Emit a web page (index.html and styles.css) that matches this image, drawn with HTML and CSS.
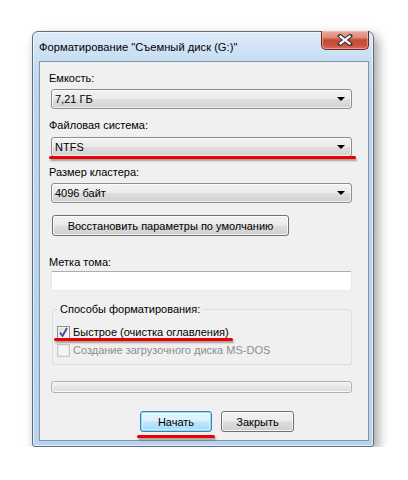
FILE: index.html
```html
<!DOCTYPE html>
<html lang="ru">
<head>
<meta charset="utf-8">
<link rel="stylesheet" href="styles.css">
</head>
<body>
<div class="window">
  <div class="titlebar">
    <span class="title">Форматирование "Съемный диск (G:)"</span>
    <div class="close">
      <svg width="16" height="12" viewBox="0 0 16 12"><path d="M3 2 L13 10 M13 2 L3 10" stroke="#3a3a3a" stroke-width="4.2" stroke-linecap="square"/><path d="M3.5 2.5 L12.5 9.5 M12.5 2.5 L3.5 9.5" stroke="#fff" stroke-width="2.2" stroke-linecap="square"/></svg>
    </div>
  </div>
  <div class="client">
    <div class="label l1">Емкость:</div>
    <div class="combo"><span>7,21 ГБ</span><i class="arrow"></i></div>
    <div class="label l2">Файловая система:</div>
    <div class="mark-wrap">
      <div class="combo"><span>NTFS</span><i class="arrow"></i></div>
      <div class="redline r1"></div>
    </div>
    <div class="label l3">Размер кластера:</div>
    <div class="combo"><span>4096 байт</span><i class="arrow"></i></div>
    <div class="btn restore">Восстановить параметры по умолчанию</div>
    <div class="label l4">Метка тома:</div>
    <div class="textbox"></div>
    <div class="group">
      <div class="legend">Способы форматирования:</div>
      <div class="check-row mark-wrap">
        <span class="checkbox checked">
          <svg width="11" height="11" viewBox="0 0 11 11"><path d="M2 5.5 L4.5 9 L9 1" fill="none" stroke="#3d4f8f" stroke-width="1.8" stroke-linejoin="round"/></svg>
        </span>
        <span class="ck-label">Быстрое (очистка оглавления)</span>
        <div class="redline r2"></div>
      </div>
      <div class="check-row disabled">
        <span class="checkbox"></span>
        <span class="ck-label">Создание загрузочного диска MS-DOS</span>
      </div>
    </div>
    <div class="progress"></div>
    <div class="buttons">
      <div class="mark-wrap">
        <div class="btn default">Начать</div>
        <div class="redline r3"></div>
      </div>
      <div class="btn">Закрыть</div>
    </div>
  </div>
</div>
</body>
</html>
```

FILE: styles.css
```css
html, body {
  margin: 0;
  padding: 0;
  background: #ffffff;
}
body {
  padding: 31px 0 0 32px;
  font-family: "Liberation Sans", Arial, sans-serif;
  font-size: 11px;
  color: #000;
  white-space: nowrap;
}
.window {
  width: 342px;
  height: 416px;
  box-sizing: border-box;
  display: flex;
  flex-direction: column;
  padding: 0 4px 5px 6px;
  border-radius: 6px 6px 3px 3px;
  border: 1px solid #5d6c7b;
  background: linear-gradient(180deg, #dbeaf8 0px, #c6ddf3 30px, #bcd6f1 60px, #b9d4f0 100%);
  box-shadow: 4px 5px 12px rgba(0, 0, 0, 0.38), 0 0 0 1px rgba(255,255,255,0.6) inset;
}
.titlebar {
  height: 29px;
  flex: none;
  display: flex;
  align-items: flex-start;
  justify-content: space-between;
  margin-left: -6px;
  margin-right: -4px;
  padding-left: 6px;
}
.title {
  margin-top: 7px;
  line-height: 16px;
  font-size: 11.2px;
}
.close {
  width: 46px;
  height: 18px;
  margin-right: 4px;
  margin-top: -1px;
  border: 1px solid #6b2a22;
  border-top: none;
  border-radius: 0 0 5px 5px;
  background: linear-gradient(180deg, #e9a99c 0%, #dd8c7a 35%, #c64a36 50%, #c9503c 75%, #d86b58 100%);
  box-shadow: inset 0 0 0 1px rgba(255, 200, 190, 0.5);
  display: flex;
  align-items: center;
  justify-content: center;
}
.client {
  flex: 1;
  border: 1px solid #8495a7;
  background: #f0f0f0;
  display: flex;
  flex-direction: column;
  padding: 8px 16px 0 11px;
}
.label {
  line-height: 16px;
  height: 16px;
  margin-left: -2px;
}
.l2 { margin-top: 8px; }
.l3 { margin-top: 7px; }
.l4 { margin-top: 18px; }
.combo {
  margin-top: 3px;
  height: 20px;
  box-sizing: border-box;
  border: 1px solid #8c8d8d;
  border-radius: 3px;
  background: linear-gradient(180deg, #f3f3f3 0%, #ebebeb 48%, #dedede 52%, #d1d1d1 100%);
  box-shadow: inset 0 0 0 1px rgba(255,255,255,0.7);
  display: flex;
  align-items: center;
  justify-content: space-between;
  padding: 0 6px 0 3px;
  line-height: 16px;
}
.l2 + .mark-wrap .combo { margin-top: 4px; }
.arrow {
  width: 0;
  height: 0;
  border-left: 4px solid transparent;
  border-right: 4px solid transparent;
  border-top: 4px solid #000;
}
.mark-wrap {
  position: relative;
}
.redline {
  position: absolute;
  height: 3px;
  background: #ee0000;
  border-radius: 2px;
  box-shadow: 1px 2px 2px rgba(0, 0, 0, 0.35);
}
.r1 { left: -2px; right: -4px; top: 23px; }
.r2 { left: -3px; width: 179px; top: 15px; }
.r3 { left: -3px; width: 78px; top: 24px; }
.btn {
  height: 21px;
  box-sizing: border-box;
  border: 1px solid #707070;
  border-radius: 3px;
  background: linear-gradient(180deg, #f2f2f2 0%, #ebebeb 48%, #dddddd 52%, #cfcfcf 100%);
  box-shadow: inset 0 0 0 1px rgba(255,255,255,0.75);
  display: flex;
  align-items: center;
  justify-content: center;
  line-height: 16px;
}
.restore {
  margin-top: 12px;
  width: 237px;
  margin-left: 1px;
}
.textbox {
  margin-top: 1px;
  height: 20px;
  box-sizing: border-box;
  background: #fff;
  border: 1px solid #e3e9ef;
  border-top-color: #abadb3;
  border-radius: 2px;
}
.group {
  margin-top: 18px;
  margin-left: 1px;
  height: 56px;
  box-sizing: border-box;
  border: 1px solid #d5dfe5;
  border-radius: 3px;
  position: relative;
  padding: 13px 0 0 4px;
  display: flex;
  flex-direction: column;
}
.legend {
  position: absolute;
  top: -9px;
  left: 5px;
  padding: 0 2px;
  background: #f0f0f0;
  line-height: 16px;
}
.check-row {
  display: flex;
  align-items: center;
  height: 18px;
  gap: 3px;
}
.checkbox {
  width: 13px;
  height: 13px;
  box-sizing: border-box;
  border: 1px solid #8e8f8f;
  background: linear-gradient(135deg, #dcdcdc 0%, #f8f8f8 100%);
  box-shadow: inset 0 0 0 1px #f4f4f4;
  display: flex;
  align-items: center;
  justify-content: center;
  flex: none;
}
.ck-label { line-height: 16px; }
.disabled .checkbox {
  border-color: #c8c8c8;
  background: #f4f4f4;
  box-shadow: inset 0 0 0 1px #e8e8e8;
}
.disabled .ck-label { color: #8d8d8d; }
.progress {
  margin-top: 16px;
  height: 12px;
  box-sizing: border-box;
  border: 1px solid #b0b0b0;
  border-radius: 3px;
  background: linear-gradient(180deg, #f3f3f3 0%, #e6e6e6 50%, #dadada 100%);
  box-shadow: inset 0 0 0 1px #f8f8f8;
}
.buttons {
  margin-top: 18px;
  display: flex;
  justify-content: flex-start;
  gap: 9px;
  padding-left: 89px;
}
.buttons .btn {
  width: 73px;
}
.btn.default {
  width: 72px;
  border-color: #3c7fb1;
  background: linear-gradient(180deg, #eaf6fd 0%, #d9f0fc 48%, #bee6fd 52%, #a7d9f5 100%);
  box-shadow: inset 0 0 0 1px #90d9f8, inset 0 0 0 2px rgba(255,255,255,0.4);
}
```
